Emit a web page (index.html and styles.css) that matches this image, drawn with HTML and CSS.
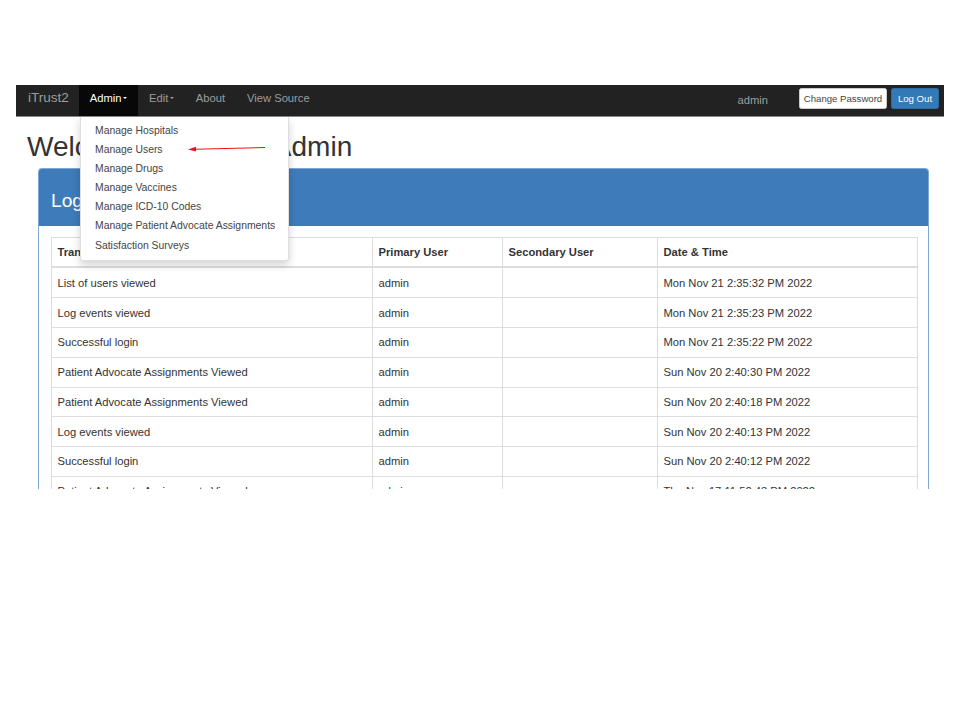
FILE: index.html
```html
<!DOCTYPE html>
<html>
<head>
<meta charset="utf-8">
<link rel="stylesheet" href="styles.css">
</head>
<body>
<div class="shot">
  <nav class="navbar">
    <div class="brand">iTrust2</div>
    <ul class="nav">
      <li class="nav-item active">Admin<span class="caret"></span></li>
      <li class="nav-item">Edit<span class="caret"></span></li>
      <li class="nav-item">About</li>
      <li class="nav-item">View Source</li>
    </ul>
    <div class="nav-right">
      <span class="user">admin</span>
      <span class="btn btn-default">Change Password</span>
      <span class="btn btn-primary">Log Out</span>
    </div>
  </nav>
  <div class="container">
    <h1 class="title">Welcome to iTrust2 Admin</h1>
    <div class="panel">
      <div class="panel-heading">Logs</div>
      <div class="panel-body">
        <table class="table">
          <colgroup>
            <col class="c1"><col class="c2"><col class="c3"><col class="c4">
          </colgroup>
          <thead>
            <tr><th>Transaction Type</th><th>Primary User</th><th>Secondary User</th><th>Date &amp; Time</th></tr>
          </thead>
          <tbody>
            <tr><td>List of users viewed</td><td>admin</td><td></td><td>Mon Nov 21 2:35:32 PM 2022</td></tr>
            <tr><td>Log events viewed</td><td>admin</td><td></td><td>Mon Nov 21 2:35:23 PM 2022</td></tr>
            <tr><td>Successful login</td><td>admin</td><td></td><td>Mon Nov 21 2:35:22 PM 2022</td></tr>
            <tr><td>Patient Advocate Assignments Viewed</td><td>admin</td><td></td><td>Sun Nov 20 2:40:30 PM 2022</td></tr>
            <tr><td>Patient Advocate Assignments Viewed</td><td>admin</td><td></td><td>Sun Nov 20 2:40:18 PM 2022</td></tr>
            <tr><td>Log events viewed</td><td>admin</td><td></td><td>Sun Nov 20 2:40:13 PM 2022</td></tr>
            <tr><td>Successful login</td><td>admin</td><td></td><td>Sun Nov 20 2:40:12 PM 2022</td></tr>
            <tr><td>Patient Advocate Assignments Viewed</td><td>admin</td><td></td><td>Thu Nov 17 11:52:43 PM 2022</td></tr>
            <tr><td>Successful login</td><td>admin</td><td></td><td>Thu Nov 17 11:52:40 PM 2022</td></tr>
          </tbody>
        </table>
      </div>
    </div>
  </div>
  <ul class="dropdown">
    <li>Manage Hospitals</li>
    <li>Manage Users</li>
    <li>Manage Drugs</li>
    <li>Manage Vaccines</li>
    <li>Manage ICD-10 Codes</li>
    <li>Manage Patient Advocate Assignments</li>
    <li>Satisfaction Surveys</li>
  </ul>
  <svg class="arrow" width="84" height="10" viewBox="0 0 84 10">
    <line x1="8" y1="5.2" x2="78" y2="3.5" stroke="#e8151b" stroke-width="1.1"/>
    <polygon points="1,5.4 9,2.8 9,7.6" fill="#e8151b"/>
  </svg>
</div>
</body>
</html>
```
FILE: styles.css
```css
html, body {
  margin: 0;
  padding: 0;
  background: #fff;
}
body {
  font-family: "Liberation Sans", Arial, Helvetica, sans-serif;
  color: #333;
}
.shot {
  position: relative;
  margin: 85px 16px 0;
  width: 928px;
  height: 404px;
  overflow: hidden;
  background: #fff;
}
.navbar {
  display: flex;
  align-items: stretch;
  height: 31px;
  background: #222;
  border-bottom: 1px solid #8a8a8a;
}
.brand {
  padding: 5px 10px 0 12px;
  font-size: 13.5px;
  line-height: 16px;
  color: #9d9d9d;
}
.nav {
  display: flex;
  list-style: none;
  margin: 0;
  padding: 0;
}
.nav-item {
  display: flex;
  align-items: center;
  padding: 0 11px 5px;
  font-size: 11.2px;
  color: #9d9d9d;
  white-space: nowrap;
}
.nav-item.active {
  background: #080808;
  color: #fff;
}
.caret {
  display: inline-block;
  width: 0;
  height: 0;
  margin-left: 1.5px;
  border-top: 2.6px solid currentColor;
  border-left: 2.2px solid transparent;
  border-right: 2.2px solid transparent;
}
.nav-right {
  margin-left: auto;
  display: flex;
  align-items: center;
  padding-right: 5px;
  padding-bottom: 4px;
}
.user {
  font-size: 11.2px;
  color: #9d9d9d;
  margin-right: 31px;
  padding-top: 3px;
}
.btn {
  display: inline-flex;
  align-items: center;
  justify-content: center;
  height: 21px;
  box-sizing: border-box;
  padding: 0 4px;
  font-size: 9.6px;
  border-radius: 2.4px;
  border: 1px solid #ccc;
  white-space: nowrap;
}
.btn-default {
  background: #fff;
  color: #444;
  margin-right: 4px;
  width: 88px;
}
.btn-primary {
  background: #337ab7;
  border-color: #2e6da4;
  color: #fff;
  width: 48px;
}
.container {
  padding: 0 12px 0 11px;
}
.title {
  margin: 14px 0 0;
  font-size: 28px;
  font-weight: 400;
  line-height: 32px;
  color: #333;
  white-space: nowrap;
}
.panel {
  margin: 5px 3px 0 11px;
  border: 1px solid #7ea7d3;
  border-radius: 3.2px;
}
.panel-heading {
  background: #3e7bba;
  color: #fff;
  height: 57px;
  box-sizing: border-box;
  padding: 21px 12px 0;
  font-size: 19.2px;
  line-height: 22px;
  border-radius: 2.4px 2.4px 0 0;
}
.panel-body {
  padding: 11px 11px 12px 12px;
}
.table {
  width: 866px;
  border-collapse: collapse;
  font-size: 11.2px;
  table-layout: fixed;
}
.table th, .table td {
  border: 1px solid #ddd;
  padding: 6.4px 5.5px;
  line-height: 16px;
  text-align: left;
  color: #333;
  white-space: nowrap;
  overflow: hidden;
}
.table th {
  font-weight: 700;
  border-bottom: 2px solid #ddd;
  padding-top: 6px;
}
.c1 { width: 321px; }
.c2 { width: 130px; }
.c3 { width: 155px; }
.c4 { width: 260px; }
.dropdown {
  position: absolute;
  left: 64px;
  top: 32px;
  width: 209px;
  box-sizing: border-box;
  margin: 0;
  padding: 3.5px 0 5px;
  list-style: none;
  background: #fff;
  border: 1px solid rgba(0, 0, 0, 0.12);
  border-top: 0;
  border-radius: 0 0 3px 3px;
  box-shadow: 0 4px 9px rgba(0, 0, 0, 0.18);
}
.dropdown li {
  padding: 0 14px;
  height: 19.2px;
  line-height: 19.2px;
  font-size: 10.4px;
  color: #444;
  white-space: nowrap;
}
.arrow {
  position: absolute;
  left: 171px;
  top: 59px;
}
```
